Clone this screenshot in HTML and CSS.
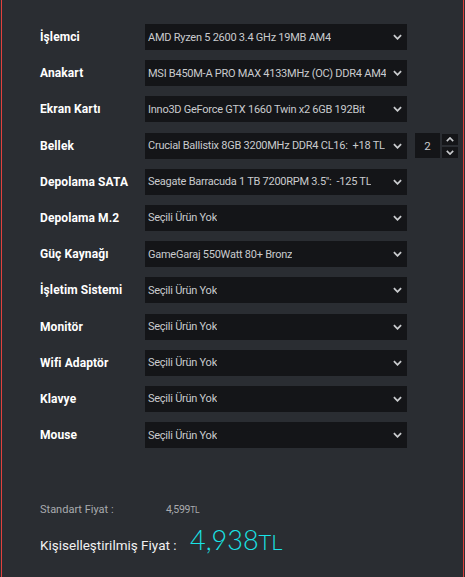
FILE: index.html
```html
<!DOCTYPE html>
<html lang="tr">
<head>
<meta charset="utf-8">
<link rel="stylesheet" href="styles.css">
</head>
<body>
<div class="panel">
  <div class="rows">
    <div class="row"><div class="label">İşlemci</div><div class="select"><span>AMD Ryzen 5 2600 3.4 GHz 19MB AM4</span><svg class="chev" viewBox="0 0 10 6"><path d="M1 1l4 4 4-4"/></svg></div></div>
    <div class="row"><div class="label">Anakart</div><div class="select"><span>MSI B450M-A PRO MAX 4133MHz (OC) DDR4 AM4</span><svg class="chev" viewBox="0 0 10 6"><path d="M1 1l4 4 4-4"/></svg></div></div>
    <div class="row"><div class="label">Ekran Kartı</div><div class="select"><span>Inno3D GeForce GTX 1660 Twin x2 6GB 192Bit</span><svg class="chev" viewBox="0 0 10 6"><path d="M1 1l4 4 4-4"/></svg></div></div>
    <div class="row"><div class="label">Bellek</div><div class="select"><span>Crucial Ballistix 8GB 3200MHz DDR4 CL16:&nbsp; +18 TL</span><svg class="chev" viewBox="0 0 10 6"><path d="M1 1l4 4 4-4"/></svg></div>
      <div class="qty">2</div>
      <div class="spin"><div class="sbtn"><svg viewBox="0 0 10 6"><path d="M1 5l4-4 4 4"/></svg></div><div class="sbtn"><svg viewBox="0 0 10 6"><path d="M1 1l4 4 4-4"/></svg></div></div>
    </div>
    <div class="row"><div class="label">Depolama SATA</div><div class="select"><span>Seagate Barracuda 1 TB 7200RPM 3.5":&nbsp; -125 TL</span><svg class="chev" viewBox="0 0 10 6"><path d="M1 1l4 4 4-4"/></svg></div></div>
    <div class="row"><div class="label">Depolama M.2</div><div class="select"><span>Seçili Ürün Yok</span><svg class="chev" viewBox="0 0 10 6"><path d="M1 1l4 4 4-4"/></svg></div></div>
    <div class="row"><div class="label">Güç Kaynağı</div><div class="select"><span>GameGaraj 550Watt 80+ Bronz</span><svg class="chev" viewBox="0 0 10 6"><path d="M1 1l4 4 4-4"/></svg></div></div>
    <div class="row"><div class="label">İşletim Sistemi</div><div class="select"><span>Seçili Ürün Yok</span><svg class="chev" viewBox="0 0 10 6"><path d="M1 1l4 4 4-4"/></svg></div></div>
    <div class="row"><div class="label">Monitör</div><div class="select"><span>Seçili Ürün Yok</span><svg class="chev" viewBox="0 0 10 6"><path d="M1 1l4 4 4-4"/></svg></div></div>
    <div class="row"><div class="label">Wifi Adaptör</div><div class="select"><span>Seçili Ürün Yok</span><svg class="chev" viewBox="0 0 10 6"><path d="M1 1l4 4 4-4"/></svg></div></div>
    <div class="row"><div class="label">Klavye</div><div class="select"><span>Seçili Ürün Yok</span><svg class="chev" viewBox="0 0 10 6"><path d="M1 1l4 4 4-4"/></svg></div></div>
    <div class="row"><div class="label">Mouse</div><div class="select"><span>Seçili Ürün Yok</span><svg class="chev" viewBox="0 0 10 6"><path d="M1 1l4 4 4-4"/></svg></div></div>
  </div>
  <div class="prices">
    <div class="std"><span class="std-label">Standart Fiyat :</span><span class="std-val">4,599<small>TL</small></span></div>
    <div class="custom"><span class="custom-label">Kişiselleştirilmiş Fiyat :</span><span class="custom-val">4,938<small>TL</small></span></div>
  </div>
</div>
</body>
</html>
```
FILE: styles.css
```css
html, body {
  margin: 0;
  padding: 0;
  background: #2b2e33;
}
body {
  font-family: "Roboto", "Noto Sans", sans-serif;
}
.panel {
  margin-left: 1px;
  width: 461px;
  height: 600px;
  border-left: 1px solid #e0413d;
  border-right: 1px solid #e0413d;
  background: #2a2d32;
  box-sizing: content-box;
}
.rows {
  padding: 24px 0 0 38px;
  display: flex;
  flex-direction: column;
  gap: 10.2px;
}
.row {
  display: flex;
  align-items: center;
  height: 26px;
}
.label {
  width: 105px;
  color: #ffffff;
  font-family: "Roboto", sans-serif;
  font-weight: 700;
  font-size: 12px;
  letter-spacing: 0.1px;
}
.select {
  width: 262px;
  height: 26px;
  background: #141518;
  display: flex;
  align-items: center;
  justify-content: space-between;
  padding: 0 5px 0 3px;
  box-sizing: border-box;
  color: #c9cbce;
  font-family: "Roboto", sans-serif;
  font-size: 11px;
  white-space: nowrap;
}
.select span {
  overflow: hidden;
  letter-spacing: -0.25px;
}
.chev {
  width: 9px;
  height: 6px;
  flex: none;
  margin-left: 2px;
}
.chev path, .sbtn path {
  fill: none;
  stroke: #c9cbce;
  stroke-width: 2;
}
.qty {
  width: 25px;
  height: 25px;
  margin-left: 8px;
  background: #141518;
  color: #c9cbce;
  font-size: 11.5px;
  display: flex;
  align-items: center;
  justify-content: center;
}
.spin {
  margin-left: 2px;
  display: flex;
  flex-direction: column;
  gap: 2px;
}
.sbtn {
  width: 16px;
  height: 11px;
  background: #141518;
  display: flex;
  align-items: center;
  justify-content: center;
}
.sbtn svg {
  width: 8px;
  height: 5px;
}
.prices {
  padding: 55px 0 0 38px;
}
.std {
  display: flex;
  align-items: baseline;
  color: #a9abae;
  font-size: 11px;
}
.std-label {
  width: 126px;
}
.std-val {
  font-size: 10.5px;
  letter-spacing: -0.3px;
}
.std-val small {
  font-size: 8.5px;
}
.custom {
  display: flex;
  align-items: baseline;
  margin-top: 7px;
}
.custom-label {
  width: 150px;
  color: #f1f1f1;
  font-size: 13.5px;
}
.custom-val {
  color: #19e3e6;
  font-size: 27px;
  font-family: "Lato", sans-serif;
  font-weight: 300;
}
.custom-val small {
  font-size: 22px;
}
```
